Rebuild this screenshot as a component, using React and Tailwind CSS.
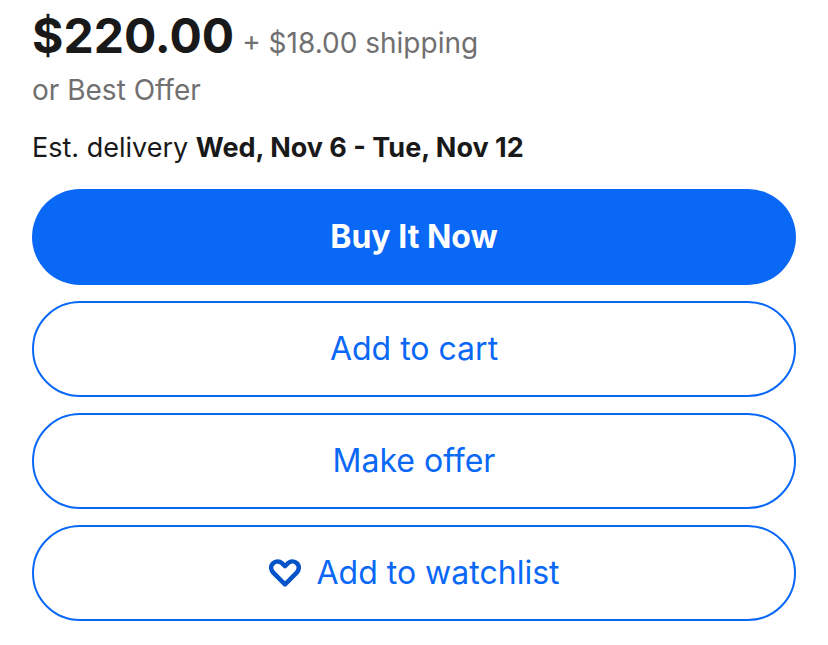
import React from 'react';

const outlineButton =
  'flex h-24 w-full items-center justify-center rounded-full border-2 border-[#0968f6] bg-white text-[32px] leading-10 text-[#0968f6]';

const HeartIcon = () => (
  <svg viewBox="0 0 32 28" className="h-7 w-8" fill="none" stroke="#0553c8" strokeWidth="4.5" strokeLinejoin="round" aria-hidden="true">
    <path d="M16 25.3 4.5 13.8C1.5 10.8 1.5 6.9 4 4.4 6.5 1.8 10.3 1.7 12.9 4.2L16 7.1 19.1 4.2c2.6-2.5 6.4-2.4 8.9.2 2.5 2.5 2.5 6.4-.5 9.4Z" />
  </svg>
);

const App = () => {
  return (
    <main className="bg-white px-8 pt-2 pb-6 font-['Inter',sans-serif] text-[#191919]">
      <div className="flex items-baseline gap-2">
        <span className="text-[48px] leading-14 font-bold">$220.00</span>
        <span className="text-[28px] leading-10 text-[#707070]">+ $18.00 shipping</span>
      </div>
      <p className="mt-1.5 text-[28px] leading-10 text-[#707070]">or Best Offer</p>
      <p className="mt-[18px] text-[27px] leading-10">
        Est. delivery <strong className="font-bold">Wed, Nov 6 - Tue, Nov 12</strong>
      </p>

      <div className="mt-[21px] flex flex-col gap-4">
        <button type="button" className="flex h-24 w-full items-center justify-center rounded-full bg-[#0968f6] text-[32px] leading-10 font-bold text-white">
          Buy It Now
        </button>
        <button type="button" className={outlineButton}>Add to cart</button>
        <button type="button" className={outlineButton}>Make offer</button>
        <button type="button" className={`${outlineButton} gap-4`}>
          <HeartIcon />
          Add to watchlist
        </button>
      </div>
    </main>
  );
};

export default App;
